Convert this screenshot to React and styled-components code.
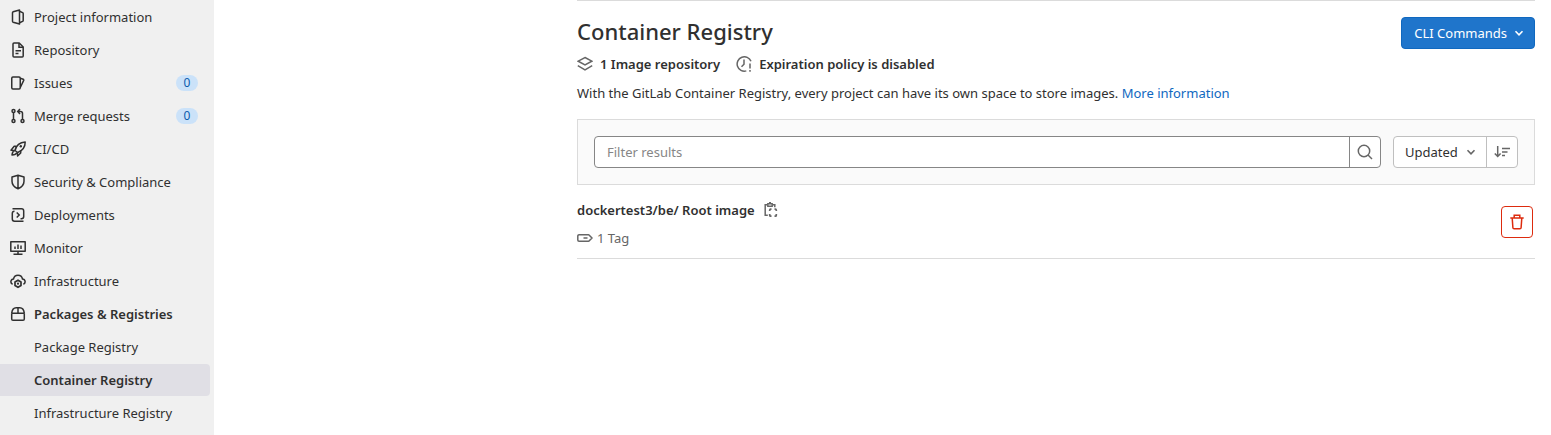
import React, { useState } from "react";
import styled, { createGlobalStyle, css } from "styled-components";

const GlobalStyle = createGlobalStyle`
  * {
    box-sizing: border-box;
  }
  body {
    margin: 0;
    background: #fff;
    color: #303030;
    font-family: "Segoe UI", "Noto Sans", "Open Sans", sans-serif;
    font-size: 13px;
    line-height: 20px;
  }
  button, input, select {
    font: inherit;
    color: inherit;
  }
`;

const Page = styled.div`
  display: flex;
  min-height: 100vh;
`;

const Sidebar = styled.nav`
  flex: 0 0 214px;
  padding: 1px 4px 0 0;
  background: #f0f0f0;
`;

const NavList = styled.ul`
  display: flex;
  flex-direction: column;
  gap: 1px;
  margin: 0;
  padding: 0;
  list-style: none;
`;

const NavLink = styled.a`
  display: flex;
  align-items: center;
  gap: 8px;
  height: 32px;
  padding: 0 12px 0 ${props => (props.$sub ? "34px" : "10px")};
  border-radius: 0 4px 4px 0;
  color: #303030;
  text-decoration: none;
  ${props =>
    props.$bold &&
    css`
      font-weight: 600;
    `}
  ${props =>
    props.$active &&
    css`
      background: #e0dfe5;
    `}
`;

const Badge = styled.span`
  margin-left: auto;
  width: 22px;
  border-radius: 8px;
  background: #cbe2f9;
  color: #0b5cad;
  font-size: 12px;
  line-height: 16px;
  text-align: center;
`;

const IconSvg = styled.svg`
  flex: none;
  width: 16px;
  height: 16px;
  fill: none;
  stroke: currentColor;
  stroke-width: 1.5;
`;

const Main = styled.main`
  flex: 1;
  min-width: 0;
`;

const Content = styled.div`
  max-width: 990px;
  margin-left: auto;
  padding: 0 16px;
`;

const Header = styled.header`
  display: flex;
  justify-content: space-between;
  padding-top: 16px;
  border-top: 1px solid #dbdbdb;
`;

const Title = styled.h1`
  margin: 0;
  font-size: 22px;
  font-weight: 500;
  line-height: 28px;
`;

const PrimaryButton = styled.button`
  display: flex;
  align-items: center;
  gap: 4px;
  height: 32px;
  padding: 0 7px 0 12px;
  border: 1px solid #1068bf;
  border-radius: 4px;
  background: #1f75cb;
  color: #fff;
`;

const MetaRow = styled.div`
  display: flex;
  gap: 16px;
  margin-top: 5px;
`;

const Meta = styled.span`
  display: flex;
  align-items: center;
  gap: 7px;
  font-weight: 600;
  svg {
    color: #666;
  }
`;

const Description = styled.p`
  margin: 9px 0 16px;
`;

const TextLink = styled.a`
  color: #1068bf;
  text-decoration: none;
`;

const FilterBar = styled.form`
  display: flex;
  gap: 12px;
  padding: 16px;
  border: 1px solid #dbdbdb;
  background: #fafafa;
`;

const SearchGroup = styled.div`
  display: flex;
  flex: 1;
  height: 32px;
  border: 1px solid #868686;
  border-radius: 4px;
  background: #fff;
`;

const SearchInput = styled.input`
  flex: 1;
  min-width: 0;
  padding: 0 12px;
  border: 0;
  border-radius: 4px;
  background: transparent;
  &::placeholder {
    color: #868686;
  }
`;

const GroupButton = styled.button`
  display: grid;
  place-items: center;
  width: 31px;
  padding: 0;
  border: 0;
  border-left: 1px solid ${props => props.$line};
  background: transparent;
  color: #666;
`;

const SortGroup = styled.div`
  display: flex;
  height: 32px;
  border: 1px solid #bfbfbf;
  border-radius: 4px;
  background: #fff;
`;

const SelectBox = styled.div`
  display: grid;
  align-items: center;
  width: 92px;
  > * {
    grid-area: 1 / 1;
  }
  svg {
    justify-self: end;
    margin-right: 7px;
    color: #666;
    pointer-events: none;
  }
`;

const SortSelect = styled.select`
  width: 100%;
  height: 30px;
  padding: 0 24px 0 11px;
  border: 0;
  background: transparent;
  appearance: none;
`;

const ImageRow = styled.article`
  display: flex;
  align-items: center;
  justify-content: space-between;
  padding: 11px 2px 10px 0;
  border-bottom: 1px solid #dbdbdb;
`;

const ImageDetails = styled.div`
  display: flex;
  flex-direction: column;
  gap: 8px;
  padding-top: 4px;
`;

const ImageName = styled.div`
  display: flex;
  align-items: center;
  gap: 8px;
  a {
    color: #303030;
    font-weight: 600;
    text-decoration: none;
  }
`;

const CopyButton = styled.button`
  display: flex;
  padding: 0;
  border: 0;
  background: none;
  color: #666;
`;

const TagCount = styled.div`
  display: flex;
  align-items: center;
  gap: 4px;
  color: #666;
`;

const DeleteButton = styled.button`
  display: grid;
  place-items: center;
  width: 32px;
  height: 32px;
  padding: 0;
  border: 1px solid #dd2b0e;
  border-radius: 4px;
  background: #fff;
  color: #dd2b0e;
`;

const icons = {
  project: (
    <>
      <path d="M9.5 1 3.2 2.8a1 1 0 0 0-.7 1v8.4a1 1 0 0 0 .7 1L9.5 15z" strokeLinejoin="round" />
      <path d="M9.5 2.2 12.6 3.6a1 1 0 0 1 .6.9v7a1 1 0 0 1-.6.9L9.5 13.8" />
    </>
  ),
  doc: (
    <>
      <path d="M9.2 1H4a1 1 0 0 0-1 1v12a1 1 0 0 0 1 1h8.2a1 1 0 0 0 1-1V5z" strokeLinejoin="round" />
      <path d="M9 1v4.2h4.2M5.5 8.7H11M5.5 11.4h3" />
    </>
  ),
  issues: (
    <>
      <rect x="1.75" y="2" width="8.5" height="12" rx="1.2" />
      <path d="M10.3 3.2 13.2 4.2a.9.9 0 0 1 .5 1.2L10.3 12.5" />
    </>
  ),
  merge: (
    <>
      <circle cx="3.5" cy="3" r="1.5" />
      <circle cx="3.5" cy="13" r="1.5" />
      <circle cx="12.5" cy="13" r="1.5" />
      <path d="M3.5 4.5v7M12.5 11.5V5.5a2 2 0 0 0-2-2H8.2M10 1 7.7 3.5 10 6" />
    </>
  ),
  rocket: (
    <>
      <path d="M5 9.5C6.2 4.5 9.5 1.3 15.2 1c0 5.300-2.700 8.700-7.500 10.500z" strokeLinejoin="round" />
      <path d="M6.500 5.300H4.200L1 9.200l4 .3M10.700 9.200v2.800L7.600 15l-.2-3.500M4.700 9.500c-2 .5-2.500 2.500-2.700 4.500 2.200 0 4.200-.7 4.800-2.500" strokeLinejoin="round" />
      <circle cx="10.800" cy="5.300" r="1.200" fill="currentColor" stroke="none" />
    </>
  ),
  shield: (
    <path d="M8 1.2 14 3v4.200c0 3.600-2.300 6-6 7.600-3.700-1.600-6-4-6-7.600V3zM8 1.200v13.600" strokeLinejoin="round" />
  ),
  deploy: (
    <>
      <path d="M2.500 1.800h9A2.200 2.200 0 0 1 13.700 4v5.500a2.200 2.200 0 0 1-2.200 2.200h-1M13.500 14.200h-9A2.200 2.200 0 0 1 2.300 12V6.500a2.200 2.200 0 0 1 2.200-2.200" />
      <path d="m6.700 5.500 2.500 2.500-2.500 2.500" />
    </>
  ),
  monitor: (
    <>
      <path d="M.8 1.800h14.400v9.400H.8zM8 11v3M3.500 14.200h9" strokeLinejoin="round" />
      <path d="M5 6.500V9M8 4.500V9M11 5.500V9" />
    </>
  ),
  cloud: (
    <>
      <path d="M2.600 11.200A2.700 2.700 0 0 1 3.500 6 4.600 4.600 0 0 1 12.500 6a2.700 2.700 0 0 1 .9 5.200" />
      <path d="m8 7.200 3 1.800v3.500L8 14.300l-3-1.800V9z" strokeWidth="1.700" strokeLinejoin="round" />
      <circle cx="8" cy="10.700" r="1.100" fill="currentColor" stroke="none" />
    </>
  ),
  package: (
    <path d="M1.700 7.200h12.600v5.800a1.300 1.300 0 0 1-1.300 1.300H3A1.300 1.300 0 0 1 1.700 13zM1.700 7.200C2 4.500 3.500 1.800 6.200 1.800h3.600c2.700 0 4.200 2.700 4.500 5.400M8 1.800v5.400" strokeLinejoin="round" />
  ),
  layers: (
    <path d="m8 1.500 6.800 3.700L8 9 1.200 5.200zM.8 9.700 8 13.800l7.200-4.100" />
  ),
  expire: (
    <>
      <path d="M15 5.200A7.200 7.200 0 1 0 10.300 14.900M8 3.500V8.200L5.500 10.800" />
      <path d="M14 7.500v5M14 14v1.800" />
    </>
  ),
  search: (
    <>
      <circle cx="7" cy="7" r="5.700" />
      <path d="m11 11 4 4" />
    </>
  ),
  chevron: <path d="m4.500 6.300 3.500 3.500 3.500-3.500" strokeWidth="1.600" />,
  sort: (
    <path d="M3.700 2v10M.8 9.500l2.900 3 2.900-3M8 4.500h8M8 8h5.500M8 11.500h3" />
  ),
  copy: (
    <>
      <path d="M4.800 2.800H2.200v10.400h2.600M9.200 2.800h2.600v2.400" />
      <path d="M4.800 1.800h4.400v2.500H4.800zM6 .8h2" strokeWidth="1.400" />
      <path d="M8.500 7.200h-.8a1 1 0 0 0-1 1V9M11.500 7.200h.8a1 1 0 0 1 1 1V9M8.500 14.200h-.8a1 1 0 0 1-1-1v-1.200M11.500 14.200h.8a1 1 0 0 0 1-1v-1.200" strokeWidth="1.700" />
    </>
  ),
  tag: (
    <path d="M2 4.800h9.500a1 1 0 0 1 .8.400L15 8l-2.700 2.800a1 1 0 0 1-.8.400H2a1.200 1.200 0 0 1-1.200-1.200V6A1.200 1.200 0 0 1 2 4.800zM6.500 8h4" />
  ),
  trash: (
    <path d="M1.300 4h13.400M5.200 4V1.200h5.600V4M3.200 4l.7 9.700a1.200 1.200 0 0 0 1.200 1.100h5.800a1.200 1.200 0 0 0 1.200-1.100L12.800 4" />
  ),
};

const Icon = ({ name }) => (
  <IconSvg viewBox="0 0 16 16" aria-hidden="true">
    {icons[name]}
  </IconSvg>
);

const navItems = [
  { label: "Project information", icon: "project" },
  { label: "Repository", icon: "doc" },
  { label: "Issues", icon: "issues", count: 0 },
  { label: "Merge requests", icon: "merge", count: 0 },
  { label: "CI/CD", icon: "rocket" },
  { label: "Security & Compliance", icon: "shield" },
  { label: "Deployments", icon: "deploy" },
  { label: "Monitor", icon: "monitor" },
  { label: "Infrastructure", icon: "cloud" },
  { label: "Packages & Registries", icon: "package", bold: true },
  { label: "Package Registry" },
  { label: "Container Registry", bold: true, active: true },
  { label: "Infrastructure Registry" },
];

const App = () => {
  const [filter, setFilter] = useState("");

  return (
    <Page>
      <GlobalStyle />
      <Sidebar>
        <NavList>
          {navItems.map(item => (
            <li key={item.label}>
              <NavLink href="#" $sub={!item.icon} $bold={item.bold} $active={item.active}>
                {item.icon && <Icon name={item.icon} />}
                {item.label}
                {item.count !== undefined && <Badge>{item.count}</Badge>}
              </NavLink>
            </li>
          ))}
        </NavList>
      </Sidebar>
      <Main>
        <Content>
          <Header>
            <Title>Container Registry</Title>
            <PrimaryButton type="button">
              CLI Commands
              <Icon name="chevron" />
            </PrimaryButton>
          </Header>
          <MetaRow>
            <Meta>
              <Icon name="layers" />
              1 Image repository
            </Meta>
            <Meta>
              <Icon name="expire" />
              Expiration policy is disabled
            </Meta>
          </MetaRow>
          <Description>
            With the GitLab Container Registry, every project can have its own space to store images.{" "}
            <TextLink href="#">More information</TextLink>
          </Description>
          <FilterBar onSubmit={e => e.preventDefault()}>
            <SearchGroup>
              <SearchInput
                type="text"
                aria-label="Filter results"
                placeholder="Filter results"
                value={filter}
                onChange={e => setFilter(e.target.value)}
              />
              <GroupButton type="submit" aria-label="Search" $line="#868686">
                <Icon name="search" />
              </GroupButton>
            </SearchGroup>
            <SortGroup>
              <SelectBox>
                <SortSelect aria-label="Sort by">
                  <option>Updated</option>
                </SortSelect>
                <Icon name="chevron" />
              </SelectBox>
              <GroupButton type="button" aria-label="Sort direction" $line="#bfbfbf">
                <Icon name="sort" />
              </GroupButton>
            </SortGroup>
          </FilterBar>
          <ImageRow>
            <ImageDetails>
              <ImageName>
                <a href="#">dockertest3/be/ Root image</a>
                <CopyButton type="button" aria-label="Copy image path">
                  <Icon name="copy" />
                </CopyButton>
              </ImageName>
              <TagCount>
                <Icon name="tag" />
                1 Tag
              </TagCount>
            </ImageDetails>
            <DeleteButton type="button" aria-label="Remove repository">
              <Icon name="trash" />
            </DeleteButton>
          </ImageRow>
        </Content>
      </Main>
    </Page>
  );
};

export default App;
